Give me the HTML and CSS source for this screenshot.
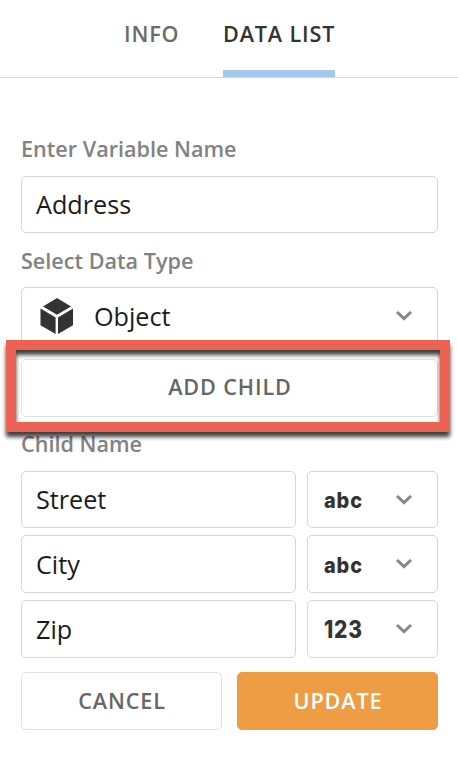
FILE: index.html
```html
<!DOCTYPE html>
<html lang="en">
<head>
<meta charset="utf-8">
<title>Data List</title>
<link rel="stylesheet" href="styles.css">
</head>
<body>
<nav class="tabs">
  <a class="tab tab-info">INFO</a>
  <a class="tab active">DATA LIST</a>
</nav>
<main class="form">
  <div class="label label-variable"><span>Enter Variable Name</span></div>
  <div class="field">Address</div>
  <div class="label label-type"><span>Select Data Type</span></div>
  <div class="field select object">
    <svg class="cube" width="34" height="36" viewBox="0 0 34 36"><path d="M17 0 31 8.4 17 16.8 3 8.4zM.5 10.5 15.6 19.5V36L.5 27.2zM33 10.5 18 19.5V36l15-8.8z"/></svg>
    <span>Object</span>
    <svg class="chevron" width="18" height="12" viewBox="0 0 18 12"><path d="M2 2 9 8.7 16 2"/></svg>
  </div>
  <div class="add-wrap">
    <button class="button add">ADD CHILD</button>
    <div class="highlight"></div>
  </div>
  <div class="label label-child"><span>Child Name</span></div>
  <div class="children">
    <div class="field street">Street</div>
    <div class="field select street">
      <svg class="kind" width="46" height="36"><text x="2" y="26" textLength="39" lengthAdjust="spacingAndGlyphs">abc</text></svg>
      <svg class="chevron" width="18" height="12" viewBox="0 0 18 12"><path d="M2 2 9 8.7 16 2"/></svg>
    </div>
    <div class="field">City</div>
    <div class="field select">
      <svg class="kind" width="46" height="36"><text x="2" y="27" textLength="39" lengthAdjust="spacingAndGlyphs">abc</text></svg>
      <svg class="chevron" width="18" height="12" viewBox="0 0 18 12"><path d="M2 2 9 8.7 16 2"/></svg>
    </div>
    <div class="field">Zip</div>
    <div class="field select">
      <svg class="kind number" width="46" height="36"><text x="2" y="27" textLength="39" lengthAdjust="spacingAndGlyphs">123</text></svg>
      <svg class="chevron" width="18" height="12" viewBox="0 0 18 12"><path d="M2 2 9 8.7 16 2"/></svg>
    </div>
  </div>
  <div class="actions">
    <button class="button">CANCEL</button>
    <button class="button update">UPDATE</button>
  </div>
</main>
</body>
</html>
```
FILE: styles.css
```css
* { box-sizing: border-box; }
body {
  margin: 0;
  height: 766px;
  background: #fff;
  color: #1b1b1b;
  font-family: "Open Sans", sans-serif;
}
.tabs {
  display: flex;
  height: 78px;
  padding-left: 124px;
  border-bottom: 1px solid #d6d6d6;
}
.tab {
  height: 77px;
  padding-top: 19px;
  font-size: 21.6px;
  line-height: 29px;
  font-weight: 580;
  letter-spacing: .85px;
  color: #6b6b6b;
  white-space: nowrap;
}
.tab-info { width: 99px; }
.tab.active {
  width: 112px;
  color: #333;
  border-bottom: 7px solid #a2caec;
}
.form { padding: 0 20px 0 21px; }
.label {
  display: flex;
  align-items: center;
  color: #828282;
  font-size: 21.6px;
  font-weight: 590;
  line-height: 30px;
}
.label-variable { height: 98px; padding-top: 43px; }
.label-type { height: 54px; padding-top: 1px; }
.label-child { height: 54px; padding-bottom: 1px; }
.field {
  display: flex;
  align-items: center;
  height: 57px;
  padding: 0 15px 1px 14px;
  border: 1px solid #d6d6d6;
  border-radius: 5px;
  font-size: 25.2px;
  line-height: 34px;
}
.select { padding-right: 24px; }
.object { height: 58px; padding-left: 18px; padding-bottom: 0; }
.cube { margin-right: 20px; fill: #333; }
.chevron {
  margin-left: auto;
  fill: none;
  stroke: #888;
  stroke-width: 3;
}
.add-wrap { position: relative; padding-top: 14px; }
.button {
  display: block;
  height: 58px;
  padding: 0 0 0 1px;
  border: 1px solid #e2e2e2;
  border-radius: 5px;
  background: #fff;
  color: #666;
  font: 580 21.6px/30px "Open Sans", sans-serif;
  letter-spacing: .9px;
}
.add { width: 100%; padding-bottom: 3px; }
.highlight {
  position: absolute;
  top: -5px;
  left: -15px;
  width: 444px;
  height: 92px;
  border: 10px solid #ed6353;
  filter: drop-shadow(0 5px 2px rgba(0, 0, 0, .75));
}
.children {
  display: grid;
  grid-template-columns: 275px 131px;
  column-gap: 11px;
  row-gap: 7px;
}
.children .field { height: 58px; }
.children .street { height: 57px; }
.children .select { padding-left: 14px; padding-bottom: 0; }
.kind text {
  font-family: Inter, sans-serif;
  font-size: 22px;
  font-weight: 800;
  letter-spacing: 1px;
  fill: #333;
}
.number text { font-size: 24px; }
.actions {
  display: grid;
  grid-template-columns: 201px 201px;
  column-gap: 15px;
  padding-top: 14px;
}
.update { background: #ee9d45; border-color: #ee9d45; color: #fff; }
```
